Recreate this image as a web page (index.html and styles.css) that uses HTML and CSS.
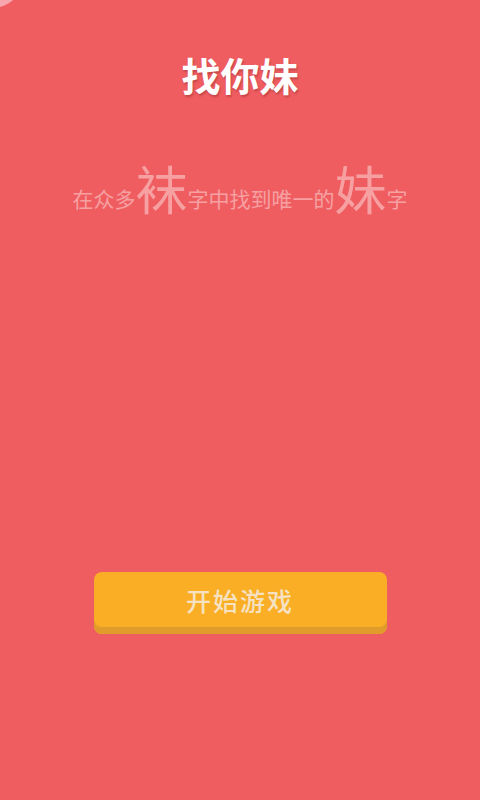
FILE: index.html
```html
<!DOCTYPE html>
<html lang="zh">
<head>
<meta charset="utf-8">
<link rel="stylesheet" href="styles.css">
</head>
<body>
<div class="screen">
  <div class="corner"></div>
  <h1 class="title">找你妹</h1>
  <p class="hint">在众多<span class="big">袜</span>字中找到唯一的<span class="big">妹</span>字</p>
  <div class="spacer"></div>
  <button class="start">开始游戏</button>
</div>
</body>
</html>
```
FILE: styles.css
```css
html, body {
  margin: 0;
  padding: 0;
}
body {
  width: 480px;
  height: 800px;
  overflow: hidden;
  background: #ef5d61;
  font-family: "Noto Sans CJK SC", "Noto Sans", sans-serif;
}
.screen {
  position: relative;
  height: 800px;
  display: flex;
  flex-direction: column;
  align-items: center;
}
.corner {
  position: absolute;
  left: -40px;
  top: -56px;
  width: 64px;
  height: 64px;
  border-radius: 50%;
  background: #f7a6ad;
}
.title {
  margin: 48px 0 0;
  font-size: 39px;
  line-height: 52px;
  font-weight: 600;
  color: #ffffff;
  text-shadow: 1px 2px 2px rgba(120, 30, 30, 0.35);
}
.hint {
  margin: 58px 0 0;
  font-size: 21px;
  line-height: 60px;
  color: #f6a0a2;
  white-space: nowrap;
}
.big {
  font-size: 52px;
  vertical-align: -3px;
}
.spacer {
  height: 344px;
}
.start {
  width: 293px;
  height: 62px;
  border: none;
  border-radius: 8px;
  background: #f9ae25;
  box-shadow: inset 0 -7px 0 #e19b2b;
  padding: 0 0 7px;
  font-family: inherit;
  font-size: 25px;
  font-weight: 500;
  color: #f6e2c2;
  letter-spacing: 2px;
}
```
